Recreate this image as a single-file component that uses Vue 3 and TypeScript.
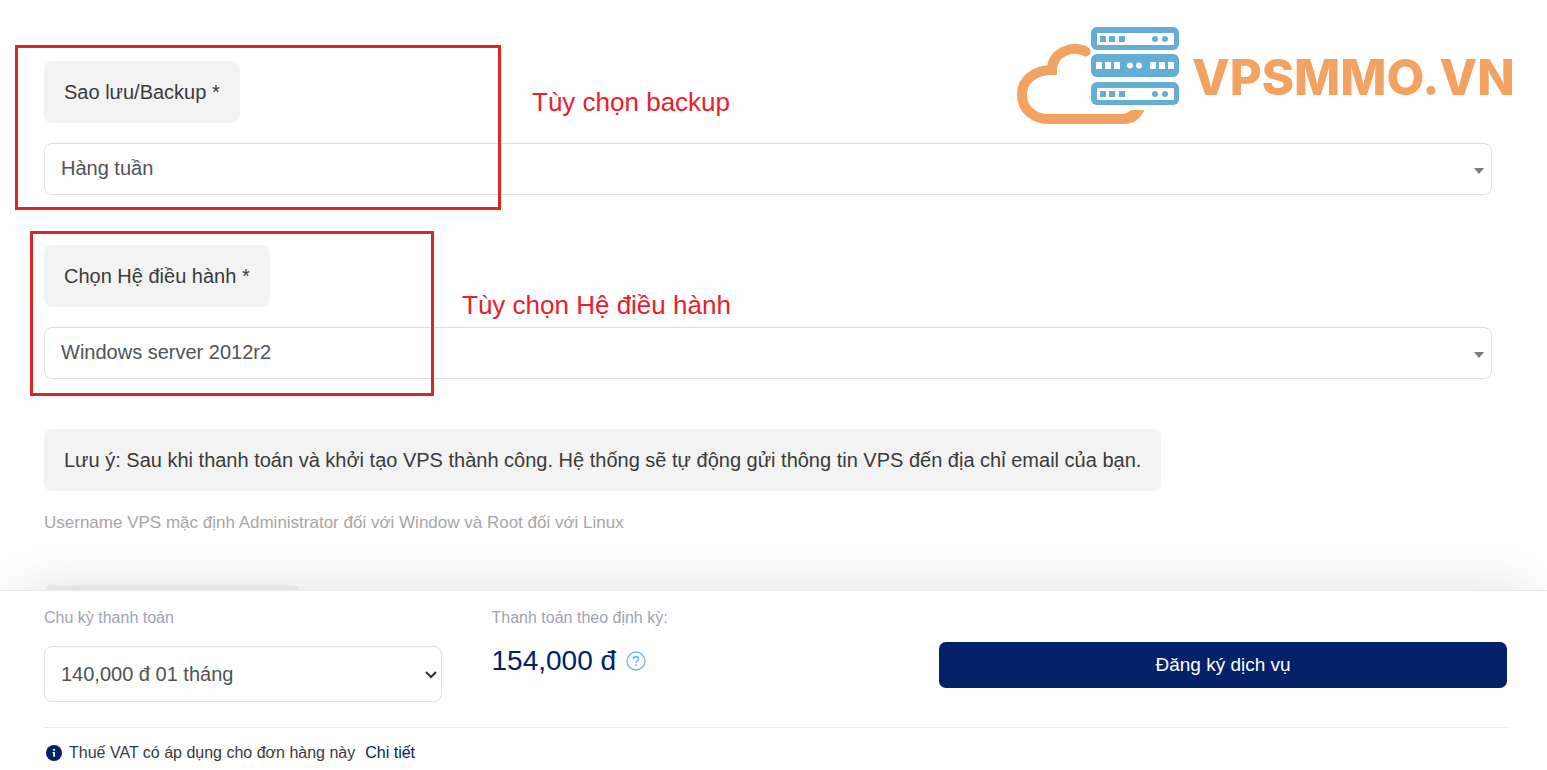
<script setup lang="ts">
import { ref } from 'vue'

interface OptionField {
  id: string
  label: string
  options: string[]
  note: string
}

const fields: OptionField[] = [
  { id: 'backup', label: 'Sao lưu/Backup *', options: ['Hàng tuần'], note: 'Tùy chọn backup' },
  { id: 'os', label: 'Chọn Hệ điều hành *', options: ['Windows server 2012r2'], note: 'Tùy chọn Hệ điều hành' },
]

const selected = ref<Record<string, string>>({
  backup: 'Hàng tuần',
  os: 'Windows server 2012r2',
})
const cycles = ['140,000 đ 01 tháng']
const cycle = ref(cycles[0])
</script>

<template>
  <div class="page">
    <main class="content">
      <svg class="logo" viewBox="0 0 500 104" role="img" aria-label="VPSMMO.VN">
        <path
          d="M68 27C54 21 35 29 35 46C17 46 5 56 5 70.500C5 86 17 95 32 95H106"
          fill="none" stroke="#f4a261" stroke-width="10"
        />
        <circle cx="68.500" cy="27.500" r="5" fill="#f4a261" />
        <path d="M105 90C110 90 112 86.500 116 86H127.500C123 95 117 100 106 100H104z" fill="#f4a261" />
        <g fill="#64add6">
          <rect x="74" y="3" width="88" height="23" rx="6" />
          <rect x="74" y="30" width="88" height="23" rx="6" />
          <rect x="74" y="58" width="88" height="23" rx="6" />
        </g>
        <g v-for="y in [9, 64]" :key="y" fill="#64add6">
          <rect x="80" :y="y" width="77" height="12" rx="1" fill="#fff" />
          <rect v-for="x in [83, 92, 102]" :key="x" :x="x" :y="y + 3" width="6" height="6" />
          <circle v-for="x in [138, 148]" :key="x" :cx="x" :cy="y + 6" r="3" />
        </g>
        <g fill="#fff">
          <rect v-for="x in [79, 88, 97, 133, 142, 151]" :key="x" :x="x" y="38" width="6" height="7" />
          <circle v-for="x in [113, 122]" :key="x" :cx="x" cy="41.500" r="3" />
        </g>
        <text x="175" y="71" class="logo-text">VPSMMO.VN</text>
      </svg>

      <section v-for="f in fields" :key="f.id" class="field" :class="f.id">
        <label class="chip" :for="f.id">{{ f.label }}</label>
        <div class="select-wrap">
          <select :id="f.id" v-model="selected[f.id]" class="select">
            <option v-for="o in f.options" :key="o">{{ o }}</option>
          </select>
          <svg class="caret" width="10" height="6" viewBox="0 0 10 6"><path d="M0 0h10L5 6z" fill="#7d7d7d" /></svg>
        </div>
        <div class="frame"></div>
        <p class="callout">{{ f.note }}</p>
      </section>

      <section class="field">
        <p class="chip">Lưu ý: Sau khi thanh toán và khởi tạo VPS thành công. Hệ thống sẽ tự động gửi thông tin VPS đến địa chỉ email của bạn.</p>
        <p class="hint">Username VPS mặc định Administrator đối với Window và Root đối với Linux</p>
      </section>
      <div class="chip next"></div>
    </main>

    <footer class="bar">
      <div class="columns">
        <div>
          <label class="caption" for="cycle">Chu kỳ thanh toán</label>
          <div class="select-wrap">
            <select id="cycle" v-model="cycle" class="select cycle">
              <option v-for="c in cycles" :key="c">{{ c }}</option>
            </select>
            <svg class="chevron" width="12" height="8" viewBox="0 0 12 8"><path d="M1 1l5 5 5-5" fill="none" stroke="#333" stroke-width="2" /></svg>
          </div>
        </div>
        <div>
          <p class="caption">Thanh toán theo định kỳ:</p>
          <p class="price">
            <span>154,000 đ</span>
            <svg width="20" height="20" viewBox="0 0 20 20">
              <circle cx="10" cy="10" r="9" fill="none" stroke="#7bb5ea" stroke-width="1.4" />
              <path d="M7.4 8C7.4 4.800 12.600 4.800 12.600 8C12.600 9.800 10 9.700 10 12" fill="none" stroke="#7bb5ea" stroke-width="1.6" />
              <circle cx="10" cy="14.300" r="1" fill="#7bb5ea" />
            </svg>
          </p>
        </div>
        <button type="button" class="submit">Đăng ký dịch vụ</button>
      </div>
      <div class="vat">
        <svg width="16" height="16" viewBox="0 0 16 16">
          <circle cx="8" cy="8" r="8" fill="#022169" />
          <path d="M7.100 4h1.800v1.700H7.100zM6.600 7h2.300v4.800H7.200V8.200h-.6z" fill="#fff" />
        </svg>
        <span>Thuế VAT có áp dụng cho đơn hàng này</span>
        <a href="#">Chi tiết</a>
      </div>
    </footer>
  </div>
</template>

<style>
body { margin: 0; background: #fff; }
</style>

<style scoped>
.page {
  display: flex;
  flex-direction: column;
  height: 100vh;
  font-family: "Liberation Sans", Arial, sans-serif;
  color: #3a3a3a;
}
.page * { box-sizing: border-box; }
p { margin: 0; }
.content {
  position: relative;
  flex: 1;
  min-height: 0;
  padding: 61px 55px 0 44px;
  overflow: hidden;
}
.logo {
  position: absolute;
  top: 24px;
  right: 30px;
  width: 500px;
  height: 104px;
}
.logo-text { font: 800 49px Inter, sans-serif; fill: #f4a261; }
.field { position: relative; margin-bottom: 50px; }
.chip {
  display: block;
  width: fit-content;
  padding: 16px 20px;
  border-radius: 8px;
  background: #f3f3f3;
  font-size: 20px;
  line-height: 30px;
}
.select-wrap { position: relative; }
.field .select-wrap { margin-top: 20px; }
.select {
  display: block;
  appearance: none;
  width: 100%;
  height: 52px;
  padding: 0 16px 2px;
  border: 1px solid #dcdfdf;
  border-radius: 8px;
  background: #fff;
  font: inherit;
  font-size: 20px;
  color: #4f5357;
}
.select.cycle { height: 56px; padding-bottom: 0; }
.caret { position: absolute; right: 8px; top: 25px; }
.chevron { position: absolute; right: 5px; top: 25px; }
.frame {
  position: absolute;
  height: 165px;
  border: 3px solid #da252c;
  pointer-events: none;
}
.backup .frame { left: -29px; top: -16px; width: 486px; }
.os .frame { left: -14px; top: -14px; width: 404px; }
.callout {
  position: absolute;
  font-size: 26px;
  line-height: 30px;
  color: #e8202c;
}
.backup .callout { left: 488px; top: 26px; }
.os .callout { left: 418px; top: 45px; }
.hint { margin-top: 20px; font-size: 17px; line-height: 24px; color: #a6a6a6; }
.next { width: 256px; height: 62px; }
.bar {
  position: relative;
  padding: 16px 40px 0 44px;
  border-top: 1px solid #e8e9e9;
  background: #fff;
  box-shadow: 0 -24px 50px -20px rgba(60, 75, 70, 0.15);
}
.columns {
  display: grid;
  grid-template-columns: 7fr 7fr 10fr;
  gap: 50px;
  padding-bottom: 25px;
  border-bottom: 1px solid #e8eaea;
}
.caption {
  display: block;
  margin-bottom: 17px;
  font-size: 16px;
  line-height: 22px;
  color: #a0a3b0;
}
.price {
  display: flex;
  align-items: center;
  gap: 10px;
  font-size: 28px;
  line-height: 30px;
  color: #022169;
}
.submit {
  height: 46px;
  margin-top: 35px;
  border: 0;
  border-radius: 7px;
  background: #022169;
  font: inherit;
  font-size: 19px;
  color: #fff;
}
.vat {
  display: flex;
  align-items: center;
  gap: 7px;
  padding: 14px 2px 6px;
  font-size: 16px;
  line-height: 22px;
}
.vat a { margin-left: 3px; color: #022169; text-decoration: none; }
</style>
